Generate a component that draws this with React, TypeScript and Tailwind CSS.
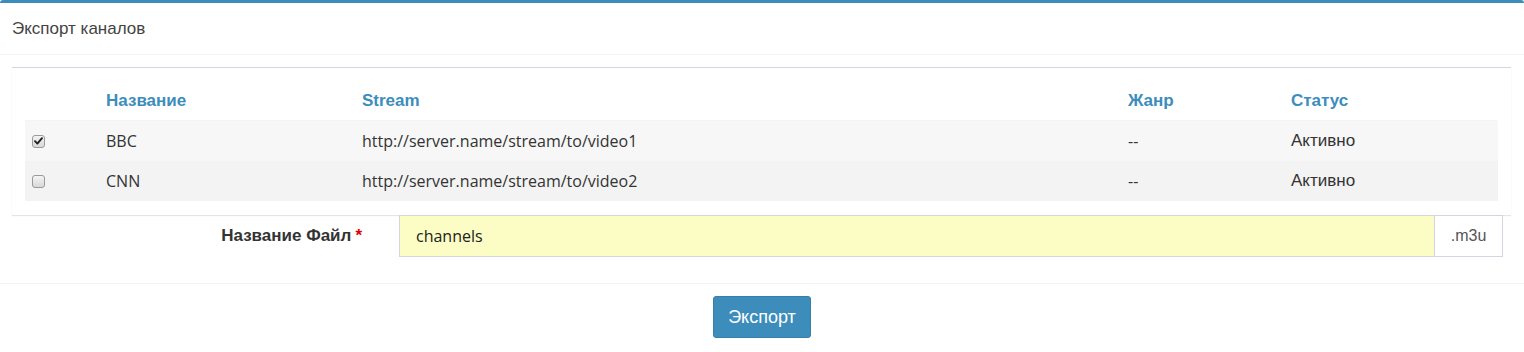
import React from "react";

interface Channel {
  name: string;
  stream: string;
  genre: string;
  status: string;
  checked: boolean;
}

const channels: Channel[] = [
  {
    name: "BBC",
    stream: "http://server.name/stream/to/video1",
    genre: "--",
    status: "Активно",
    checked: true,
  },
  {
    name: "CNN",
    stream: "http://server.name/stream/to/video2",
    genre: "--",
    status: "Активно",
    checked: false,
  },
];

const sans = "font-['Open_Sans','Noto_Sans',sans-serif]";
const arial = "font-['Liberation_Sans',Arial,sans-serif]";

const Checkbox: React.FC<{ checked: boolean }> = ({ checked }) => (
  <span className="flex h-[13px] w-[13px] items-center justify-center rounded-[3px] border border-[#9a9a9a] bg-gradient-to-b from-[#f4f4f4] to-[#d8d8d8]">
    {checked && (
      <svg width="9" height="8" viewBox="0 0 9 8">
        <path
          d="M1 4.2 L3.4 6.6 L8 1.2"
          fill="none"
          stroke="#222"
          strokeWidth="1.9"
          strokeLinecap="round"
          strokeLinejoin="round"
        />
      </svg>
    )}
  </span>
);

const cols = "grid grid-cols-[81px_256px_766px_163px_1fr] items-center";

export default function App() {
  return (
    <div className={`h-[352px] w-[1524px] bg-white text-[#333] ${arial}`}>
      <div className="rounded-t-[3px] border-t-[3px] border-[#3c8dbc] bg-white">
        <div className="flex h-[52px] items-center border-b border-[#f4f4f4] px-[12px] pt-[1px] text-[17px] text-[#444]">
          Экспорт каналов
        </div>

        <div className="pt-[12px]">
          <div className="mr-[13px] ml-[12px] border-t border-[#d2d6de] px-[13px] pt-[11px] pb-[14px] shadow-[0_1px_1px_rgba(0,0,0,0.1)]">
            <div
              className={`${cols} h-[41px] pt-[3px] text-[17px] font-bold text-[#3c8dbc]`}
            >
              <span />
              <span>Название</span>
              <span>Stream</span>
              <span>Жанр</span>
              <span>Статус</span>
            </div>
            {channels.map((ch, index) => (
              <div
                key={ch.name}
                className={`${cols} ${index === 0 ? "h-[41px] border-t border-[#f4f4f4] bg-[#f7f7f7]" : "h-[40px] bg-[#f3f3f3]"}`}
              >
                <span className="pl-[7px]">
                  <Checkbox checked={ch.checked} />
                </span>
                <span className={`${sans} text-[16px]`}>{ch.name}</span>
                <span className={`${sans} text-[16px]`}>{ch.stream}</span>
                <span className={`${sans} text-[16px]`}>{ch.genre}</span>
                <span className="text-[17px]">{ch.status}</span>
              </div>
            ))}
          </div>

          <div className="flex h-[42px] items-stretch">
            <label className="flex w-[399px] items-center justify-end pr-[37px] text-[17px] font-bold text-[#333]">
              Название Файл <span className="ml-[4px] text-[#dd0000]">*</span>
            </label>
            <div className="flex h-[42px] w-[1104px]">
              <div
                className={`flex flex-1 items-center border border-[#d2d6de] bg-[#fbfdc4] pl-[16px] text-[16px] text-[#222] ${sans}`}
              >
                channels
              </div>
              <div className="flex w-[68px] items-center justify-center border border-l-0 border-[#d2d6de] bg-white text-[16px] text-[#555]">
                .m3u
              </div>
            </div>
          </div>
          <div className="h-[26px]" />
        </div>

        <div className="flex justify-center border-t border-[#f4f4f4] pt-[12px]">
          <button className="h-[42px] w-[98px] rounded-[3px] border border-[#367fa9] bg-[#3c8dbc] text-[18px] text-white">
            Экспорт
          </button>
        </div>
      </div>
    </div>
  );
}
